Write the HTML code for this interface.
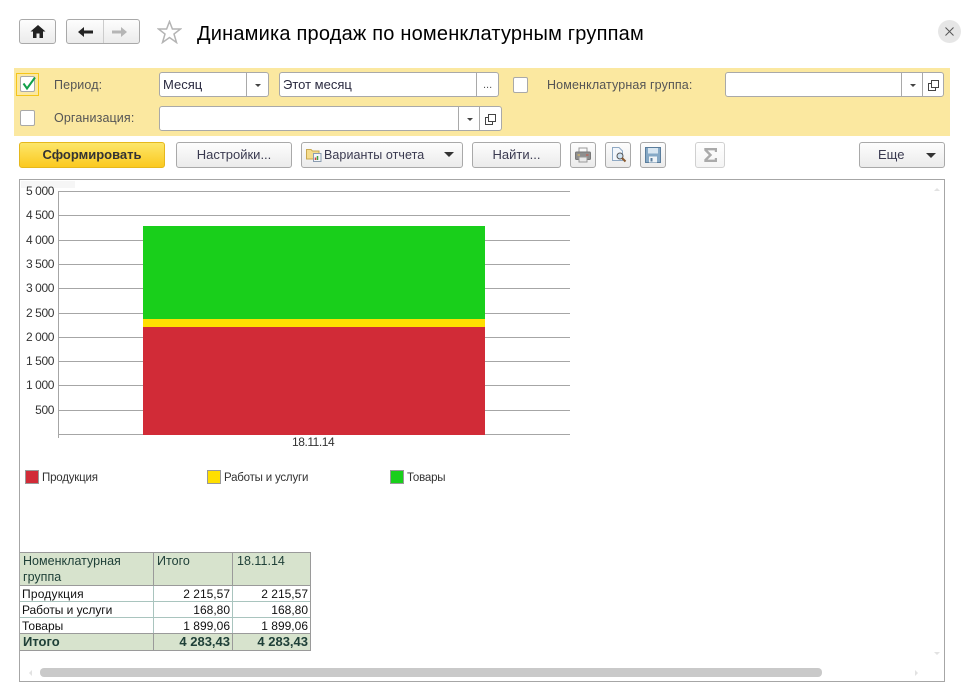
<!DOCTYPE html>
<html lang="ru"><head><meta charset="utf-8"><title>Динамика продаж</title>
<style>
html,body{margin:0;padding:0;background:#fff}
body{width:971px;height:695px;position:relative;overflow:hidden;font-family:"Liberation Sans",Arial,sans-serif;font-size:12px;color:#333}
.a{position:absolute;box-sizing:border-box;white-space:nowrap}
.btn{position:absolute;box-sizing:border-box;border:1px solid #a9a9a9;border-radius:3px;background:linear-gradient(#fdfdfd,#ebebeb);text-align:center;height:26px;line-height:24px;font-size:13px;color:#3a3a50;white-space:nowrap}
.inp{position:absolute;box-sizing:border-box;border:1px solid #a9a9a9;border-radius:3px;background:#fff;height:25px;line-height:23px;font-size:13px;color:#2a2a40;padding-left:3px}
.d{position:absolute;top:0;bottom:0;width:1px;background:#a9a9a9}
.lbl{position:absolute;font-size:12.5px;color:#555;white-space:nowrap;line-height:16px;letter-spacing:.13px}
.cb{position:absolute;box-sizing:border-box;width:15px;height:16px;background:#fff;border:1px solid #a9a9a9;border-radius:2px}
.tri{position:absolute;width:0;height:0;border-left:3px solid transparent;border-right:3px solid transparent;border-top:3px solid #444}
.tri2{position:absolute;width:0;height:0;border-left:5px solid transparent;border-right:5px solid transparent;border-top:5px solid #333}
.g{position:absolute;left:58px;width:512px;height:1px;background:#a6a6a6}
.yl{position:absolute;left:20px;width:34px;text-align:right;font-size:12px;line-height:14px;color:#333;letter-spacing:-.4px}
.leg{position:absolute;top:470px;width:14px;height:14px;box-sizing:border-box;border:1px solid #999}
.lt{position:absolute;top:471px;font-size:11.5px;line-height:14px;color:#333;letter-spacing:-.2px}
.c{position:absolute;box-sizing:border-box;font-size:12px;line-height:16px;color:#111;white-space:nowrap}
.h{font-size:12.5px;color:#1f4038;letter-spacing:.02px}
.b{font-size:13px;font-weight:bold;color:#1f4038}
.r{text-align:right}
</style></head><body>

<!-- nav -->
<div class="btn" style="left:19px;top:19px;width:37px;height:25px"></div>
<svg class="a" style="left:30px;top:25px" width="16" height="13" viewBox="0 0 16 13"><path d="M8 0L15.500 6.500H13V13H9.500V8.500H6.500V13H3V6.500H.5Z" fill="#222"/></svg>
<div class="btn" style="left:66px;top:19px;width:74px;height:25px"><div class="d" style="left:36px;background:#ccc"></div></div>
<svg class="a" style="left:78px;top:26px" width="15" height="12" viewBox="0 0 15 12"><path d="M0 6L6 1V4.500H15V7.500H6V11Z" fill="#222"/></svg>
<svg class="a" style="left:112px;top:26px" width="15" height="12" viewBox="0 0 15 12"><path d="M15 6L9 1V4.500H0V7.500H9V11Z" fill="#b5b5b5"/></svg>
<svg class="a" style="left:157px;top:20px" width="25" height="24" viewBox="0 0 25 24"><path d="M12.500 1.500L15.400 9H23.500L17 14L19.500 22.500L12.500 17.500L5.500 22.500L8 14L1.500 9H9.600Z" fill="none" stroke="#b4b4b4" stroke-width="1.500"/></svg>
<div class="a" style="left:197px;top:21px;font-size:20px;line-height:26px;color:#000;letter-spacing:.2px">Динамика продаж по номенклатурным группам</div>
<div class="a" style="left:938px;top:20px;width:23px;height:23px;border-radius:50%;background:#e6e6e6"></div>
<svg class="a" style="left:945px;top:27px" width="9" height="9" viewBox="0 0 9 9"><path d="M.5 .5L8.500 8.500M8.500 .5L.5 8.500" stroke="#555" stroke-width="1" fill="none"/></svg>

<!-- filter panel -->
<div class="a" style="left:14px;top:68px;width:936px;height:68px;background:#fbe8a0"></div>
<div class="a" style="left:16px;top:73px;width:23px;height:23px;border:1px solid #f5c518"></div>
<div class="cb" style="left:20px;top:76px"></div>
<svg class="a" style="left:21px;top:76px" width="16" height="15" viewBox="0 0 16 15"><path d="M2.500 7.500L6 12.500L14 1.500" fill="none" stroke="#12a04a" stroke-width="2"/></svg>
<div class="lbl" style="left:54px;top:77px">Период:</div>
<div class="inp" style="left:159px;top:72px;width:110px">Месяц<div class="d" style="left:86px"></div><div class="tri" style="left:95px;top:11px"></div></div>
<div class="inp" style="left:279px;top:72px;width:220px">Этот месяц<div class="d" style="left:196px"></div><div class="a" style="left:203px;top:1px;font-size:11px;color:#555">...</div></div>
<div class="cb" style="left:513px;top:77px"></div>
<div class="lbl" style="left:547px;top:77px">Номенклатурная группа:</div>
<div class="inp" style="left:725px;top:72px;width:219px"><div class="d" style="left:175px"></div><div class="tri" style="left:184px;top:11px"></div><div class="d" style="left:196px"></div>
<svg class="a" style="left:202px;top:7px" width="11" height="11" viewBox="0 0 11 11"><path d="M3.500 .5H10.500V7.500H3.500ZM3.500 3.500H.5V10.500H7.500V7.500" fill="none" stroke="#444"/></svg></div>
<div class="cb" style="left:20px;top:110px"></div>
<div class="lbl" style="left:54px;top:110px">Организация:</div>
<div class="inp" style="left:159px;top:106px;width:343px"><div class="d" style="left:298px"></div><div class="tri" style="left:307px;top:11px"></div><div class="d" style="left:319px"></div>
<svg class="a" style="left:325px;top:7px" width="11" height="11" viewBox="0 0 11 11"><path d="M3.500 .5H10.500V7.500H3.500ZM3.500 3.500H.5V10.500H7.500V7.500" fill="none" stroke="#444"/></svg></div>

<!-- toolbar -->
<div class="btn" style="left:19px;top:142px;width:146px;background:linear-gradient(#fce66a,#fbc91f);border-color:#e5b81c;font-weight:bold;font-size:13px;color:#333">Сформировать</div>
<div class="btn" style="left:176px;top:142px;width:116px">Настройки...</div>
<div class="btn" style="left:301px;top:142px;width:162px;text-align:left;padding-left:22px;font-size:12.500px;letter-spacing:.07px">Варианты отчета<div class="tri2" style="left:142px;top:9px"></div></div>
<svg class="a" style="left:306px;top:147px" width="16" height="15" viewBox="0 0 16 15"><path d="M.5 2.500H5L6.500 4H13V12H.5Z" fill="#f5dc8c" stroke="#c9a850"/><rect x="7.500" y="6.500" width="7.500" height="8" fill="#f4f6f8" stroke="#8a9cb0"/><path d="M9.500 13V10.500" stroke="#d04040" stroke-width="1.500"/><path d="M11.500 13V9" stroke="#40a040" stroke-width="1.500"/></svg>
<div class="btn" style="left:472px;top:142px;width:89px">Найти...</div>
<div class="btn" style="left:570px;top:142px;width:26px"></div>
<svg class="a" style="left:575px;top:147px" width="16" height="16" viewBox="0 0 16 16"><rect x="4" y="1" width="8" height="5" fill="#fafafa" stroke="#999"/><rect x=".5" y="5" width="15" height="7.500" rx="1" fill="#8f8f8f" stroke="#777"/><rect x="4" y="10" width="8" height="5" fill="#e9e9e9" stroke="#999"/><path d="M2.500 8H5" stroke="#e8c060"/><path d="M11 8H13.500" stroke="#d05040"/></svg>
<div class="btn" style="left:605px;top:142px;width:26px"></div>
<svg class="a" style="left:611px;top:147px" width="16" height="16" viewBox="0 0 16 16"><path d="M1.500 .5H8L11.500 4V13.500H1.500Z" fill="#f2f6fb" stroke="#8fa9c4"/><circle cx="9" cy="9" r="3" fill="#cfe2f2" stroke="#555"/><path d="M11 11L14.500 14.500" stroke="#8a5a30" stroke-width="2"/></svg>
<div class="btn" style="left:640px;top:142px;width:26px"></div>
<svg class="a" style="left:645px;top:147px" width="16" height="16" viewBox="0 0 16 16"><rect x=".5" y=".5" width="15" height="15" fill="#86a9c6" stroke="#5a7d9c"/><rect x="3" y="1" width="10" height="5.500" fill="#d8e6f1"/><rect x="4" y="9.500" width="8" height="6" fill="#eef3f7"/><rect x="5.500" y="11" width="2" height="3.500" fill="#5a7d9c"/></svg>
<div class="btn" style="left:695px;top:142px;width:30px;border-color:#d0d0d0;background:linear-gradient(#fff,#f4f4f4)"></div>
<svg class="a" style="left:704px;top:148px" width="13" height="14" viewBox="0 0 13 14"><path d="M12 4V1.200H1.500V2L6.500 7L1.500 12V12.800H12V10" fill="none" stroke="#aaa" stroke-width="2.400"/></svg>
<div class="btn" style="left:859px;top:142px;width:86px;text-align:left;padding-left:18px">Еще<div class="tri2" style="left:66px;top:10px"></div></div>

<!-- report frame -->
<div class="a" style="left:19px;top:179px;width:926px;height:503px;border:1px solid #a6a6a6"></div>
<div class="a" style="left:21px;top:181px;width:54px;height:7px;background:#f6f6f6"></div>

<!-- chart -->
<div class="a" style="left:58px;top:191px;width:1px;height:247px;background:#a6a6a6"></div>
<div class="g" style="top:191px"></div><div class="g" style="top:215px"></div><div class="g" style="top:240px"></div><div class="g" style="top:264px"></div><div class="g" style="top:288px"></div><div class="g" style="top:313px"></div><div class="g" style="top:337px"></div><div class="g" style="top:361px"></div><div class="g" style="top:385px"></div><div class="g" style="top:410px"></div><div class="g" style="top:434px"></div>
<div class="yl" style="top:184px">5 000</div><div class="yl" style="top:208px">4 500</div><div class="yl" style="top:233px">4 000</div><div class="yl" style="top:257px">3 500</div><div class="yl" style="top:281px">3 000</div><div class="yl" style="top:306px">2 500</div><div class="yl" style="top:330px">2 000</div><div class="yl" style="top:354px">1 500</div><div class="yl" style="top:378px">1 000</div><div class="yl" style="top:403px">500</div>
<div class="a" style="left:143px;top:226px;width:342px;height:93px;background:#19cf1b"></div>
<div class="a" style="left:143px;top:319px;width:342px;height:8px;background:#ffdf00"></div>
<div class="a" style="left:143px;top:327px;width:342px;height:108px;background:#d12b37"></div>
<div class="a" style="left:292px;top:435px;font-size:12px;line-height:14px;letter-spacing:-.45px">18.11.14</div>

<div class="leg" style="left:25px;background:#d12b37"></div><div class="lt" style="left:42px">Продукция</div>
<div class="leg" style="left:207px;background:#ffdf00"></div><div class="lt" style="left:224px">Работы и услуги</div>
<div class="leg" style="left:390px;background:#19cf1b"></div><div class="lt" style="left:407px">Товары</div>

<!-- table -->
<div class="a" style="left:20px;top:552px;width:291px;height:99px;background:#fff"></div>
<div class="a" style="left:20px;top:552px;width:291px;height:34px;background:#d7e3cd"></div>
<div class="a" style="left:20px;top:633px;width:291px;height:18px;background:#d7e3cd"></div>
<div class="a" style="left:20px;top:552px;width:291px;height:1px;background:#9a9a9a"></div>
<div class="a" style="left:20px;top:585px;width:291px;height:1px;background:#9a9a9a"></div>
<div class="a" style="left:20px;top:601px;width:291px;height:1px;background:#a9c4be"></div>
<div class="a" style="left:20px;top:617px;width:291px;height:1px;background:#a9c4be"></div>
<div class="a" style="left:20px;top:633px;width:291px;height:1px;background:#9a9a9a"></div>
<div class="a" style="left:20px;top:650px;width:291px;height:1px;background:#9a9a9a"></div>
<div class="a" style="left:153px;top:552px;width:1px;height:34px;background:#9a9a9a"></div>
<div class="a" style="left:232px;top:552px;width:1px;height:34px;background:#9a9a9a"></div>
<div class="a" style="left:310px;top:552px;width:1px;height:99px;background:#9a9a9a"></div>
<div class="a" style="left:153px;top:586px;width:1px;height:47px;background:#a9c4be"></div>
<div class="a" style="left:232px;top:586px;width:1px;height:47px;background:#a9c4be"></div>
<div class="a" style="left:153px;top:633px;width:1px;height:18px;background:#9a9a9a"></div>
<div class="a" style="left:232px;top:633px;width:1px;height:18px;background:#9a9a9a"></div>
<div class="c h" style="left:23px;top:553px">Номенклатурная<br>группа</div>
<div class="c h" style="left:157px;top:553px">Итого</div>
<div class="c h" style="left:237px;top:553px">18.11.14</div>
<div class="c" style="left:22px;top:586px;letter-spacing:.2px">Продукция</div><div class="c r" style="left:154px;width:76px;top:586px">2 215,57</div><div class="c r" style="left:233px;width:75px;top:586px">2 215,57</div>
<div class="c" style="left:22px;top:602px;letter-spacing:-.05px">Работы и услуги</div><div class="c r" style="left:154px;width:76px;top:602px">168,80</div><div class="c r" style="left:233px;width:75px;top:602px">168,80</div>
<div class="c" style="left:22px;top:618px">Товары</div><div class="c r" style="left:154px;width:76px;top:618px">1 899,06</div><div class="c r" style="left:233px;width:75px;top:618px">1 899,06</div>
<div class="c b" style="left:23px;top:634px">Итого</div><div class="c r b" style="left:154px;width:76px;top:634px">4 283,43</div><div class="c r b" style="left:233px;width:75px;top:634px">4 283,43</div>

<!-- scrollbars -->
<div class="a" style="left:40px;top:668px;width:782px;height:9px;border-radius:4px;background:#c9c9c9"></div>
<div class="a" style="left:29px;top:670px;width:0;height:0;border-top:3px solid transparent;border-bottom:3px solid transparent;border-right:3px solid #e2e2e2"></div>
<div class="a" style="left:915px;top:670px;width:0;height:0;border-top:3px solid transparent;border-bottom:3px solid transparent;border-left:3px solid #e2e2e2"></div>
<div class="a" style="left:934px;top:188px;width:0;height:0;border-left:3px solid transparent;border-right:3px solid transparent;border-bottom:3px solid #e2e2e2"></div>
<div class="a" style="left:934px;top:652px;width:0;height:0;border-left:3px solid transparent;border-right:3px solid transparent;border-top:3px solid #e2e2e2"></div>
</body></html>
